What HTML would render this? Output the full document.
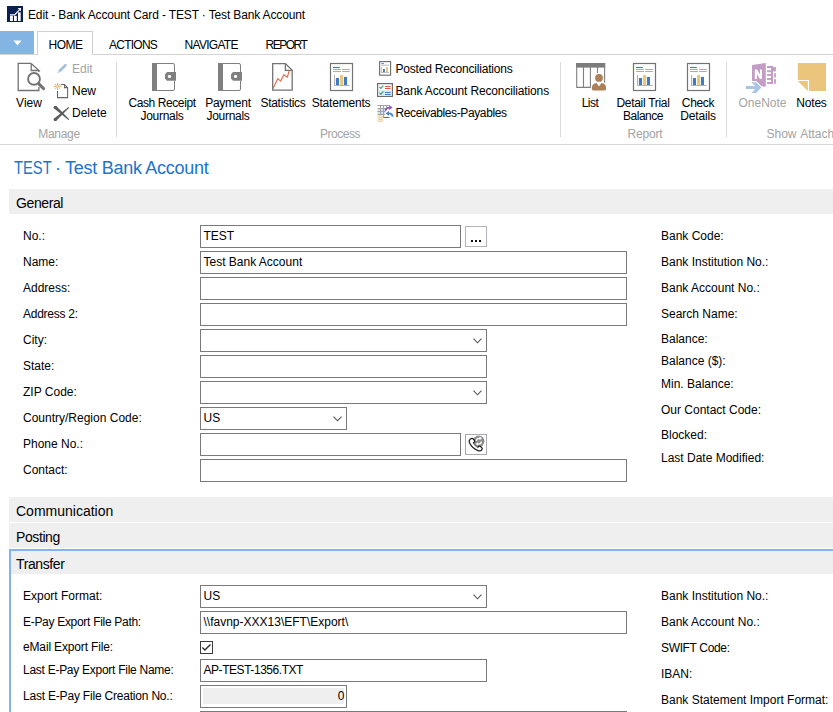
<!DOCTYPE html>
<html><head><meta charset="utf-8">
<style>
html,body{margin:0;padding:0;background:#fff;width:833px;height:712px;overflow:hidden;position:relative;font-family:"Liberation Sans",sans-serif;color:#000}
.a{position:absolute}
.t{position:absolute;font-size:12px;line-height:14px;white-space:nowrap}
.c{text-align:center}
.g{color:#a3a3a3}
.hd{position:absolute;background:#efefef;left:9px;width:824px;height:25px}
.hd span{position:absolute;left:7px;top:6px;font-size:14px;line-height:16px;letter-spacing:-0.4px}
.bx{position:absolute;box-sizing:border-box;border:1px solid #7a7a7a;height:23px;background:#fff}
.bx span{position:absolute;left:2.5px;top:3px;font-size:12px;line-height:14px;white-space:nowrap}
.chev{position:absolute;right:4px;top:8px;width:9px;height:6px}
.sep{position:absolute;top:62px;width:1px;height:75px;background:#dadada}
</style></head><body>

<!-- title bar -->
<svg class="a" style="left:7px;top:6px" width="16" height="16" viewBox="0 0 16 16">
<rect width="16" height="16" fill="#0a1f52"/>
<rect x="3" y="9.9" width="2.9" height="5.1" fill="#fff"/>
<rect x="7" y="9.9" width="2.8" height="5.1" fill="#fff"/>
<rect x="11" y="6.4" width="2.7" height="8.6" fill="#fff"/>
<path d="M2.9 8.8 H7.6 L12.6 3.6" stroke="#fff" stroke-width="1.2" fill="none"/>
<path d="M10.6 1.9 H14 V5.3 Z" fill="#fff"/>
</svg>
<div class="t" style="left:28px;top:8px;letter-spacing:-0.14px">Edit - Bank Account Card - TEST · Test Bank Account</div>

<!-- tabs -->
<div class="a" style="left:0;top:31px;width:34px;height:23px;background:#84b4e4"></div>
<svg class="a" style="left:13px;top:40px" width="9" height="6" viewBox="0 0 9 6"><path d="M0.5 0.5 L8.5 0.5 L4.5 5.5Z" fill="#fff"/></svg>
<div class="a" style="left:0;top:54px;width:833px;height:1px;background:#d4d4d4"></div>
<div class="a" style="left:37px;top:31px;width:54px;height:23px;border:1px solid #d0d0d0;border-bottom:none;background:#fff"></div>
<div class="t" style="left:48.5px;top:38px;letter-spacing:-0.5px">HOME</div>
<div class="t" style="left:109px;top:38px;letter-spacing:-0.75px">ACTIONS</div>
<div class="t" style="left:184.5px;top:38px;letter-spacing:-0.7px">NAVIGATE</div>
<div class="t" style="left:265.5px;top:38px;letter-spacing:-1.5px">REPORT</div>

<!-- ribbon -->
<div class="a" style="left:0;top:144px;width:833px;height:1px;background:#d6d6d6"></div>
<div class="sep" style="left:116px"></div>
<div class="sep" style="left:560px"></div>
<div class="sep" style="left:726px"></div>


<!-- Manage group -->
<svg class="a" style="left:16px;top:61px" width="32" height="32" viewBox="0 0 32 32">
<path d="M15.2 2.4 H2.2 V29.5 H22.9 V26" stroke="#737373" stroke-width="1.3" fill="none"/>
<path d="M15.2 2.4 V9.5 H22.9 L15.2 2.4" stroke="#737373" stroke-width="1.3" fill="none" stroke-linejoin="miter"/>
<path d="M22.9 9.5 V11" stroke="#737373" stroke-width="1.3" fill="none"/>
<circle cx="18" cy="17.9" r="5.9" stroke="#737373" stroke-width="1.9" fill="none"/>
<path d="M22.6 22.6 L27.6 27.6" stroke="#737373" stroke-width="3" stroke-linecap="round"/>
</svg>
<div class="t c" style="left:9px;top:96px;width:40px">View</div>
<svg class="a" style="left:55px;top:62px" width="14" height="14" viewBox="0 0 14 14">
<path d="M3.2 8.6 L9.6 2.2 Q10.3 1.5 11 2.2 L11.5 2.7 Q12.2 3.4 11.5 4.1 L5.1 10.5 Z" fill="#a3bfe0"/>
<path d="M3 9 L4.7 10.7 L1.9 11.8 Z" fill="#c5d7ec"/>
</svg>
<div class="t g" style="left:72px;top:62px">Edit</div>
<svg class="a" style="left:53px;top:83px" width="16" height="16" viewBox="0 0 16 16">
<path d="M4.5 8.1 V14.6 H14.6 V4.6 L11.5 1.5 H7.8" stroke="#666" stroke-width="1.05" fill="none"/>
<path d="M11.5 1.5 V4.6 H14.6" stroke="#666" stroke-width="1.05" fill="none"/>
<g stroke="#e9b76a" stroke-width="1.1" stroke-linecap="round"><path d="M4.5 0.4 V6.4 M1.3 3.4 H7.7 M2.5 1.4 L2.6 1.5 M6.5 1.4 L6.4 1.5 M2.5 5.4 L2.6 5.3 M6.5 5.4 L6.4 5.3"/></g>
<circle cx="4.5" cy="3.4" r="1.3" fill="#fff" stroke="#e9b76a" stroke-width="1"/>
</svg>
<div class="t" style="left:72px;top:84px">New</div>
<svg class="a" style="left:53px;top:105px" width="17" height="16" viewBox="0 0 17 16">
<path d="M1.13 3.49 L15.43 15.01 L16.17 14.19 L3.27 1.11 Z" fill="#5c5c5c"/><circle cx="2.2" cy="2.3" r="1.6" fill="#5c5c5c"/>
<path d="M3.27 15.79 L16.17 2.71 L15.43 1.89 L1.13 13.41 Z" fill="#5c5c5c"/><circle cx="2.2" cy="14.6" r="1.6" fill="#5c5c5c"/>
</svg>
<div class="t" style="left:72px;top:106px">Delete</div>
<div class="t c g" style="left:19px;top:127px;width:80px;letter-spacing:-0.3px">Manage</div>

<!-- Process group -->
<svg class="a" style="left:148px;top:61px" width="32" height="32" viewBox="0 0 32 32">
<rect x="4" y="2" width="5" height="28" fill="#808080"/>
<path d="M8.5 2.5 H25 Q26.5 2.5 26.5 4 V11 M26.5 19.7 V28 Q26.5 29.5 25 29.5 H8.5" stroke="#808080" stroke-width="1" fill="none"/>
<path d="M19 11 H28 V19.7 H19 L17 17.5 V13.2 Z" fill="#808080"/>
<circle cx="21.5" cy="15.4" r="1.6" fill="#fff"/>
</svg>
<div class="t c" style="left:122px;top:96px;width:80px;letter-spacing:-0.4px">Cash Receipt</div>
<div class="t c" style="left:122px;top:108.5px;width:80px;letter-spacing:-0.3px">Journals</div>
<svg class="a" style="left:214px;top:61px" width="32" height="32" viewBox="0 0 32 32">
<rect x="4" y="2" width="5" height="28" fill="#808080"/>
<path d="M8.5 2.5 H25 Q26.5 2.5 26.5 4 V11 M26.5 19.7 V28 Q26.5 29.5 25 29.5 H8.5" stroke="#808080" stroke-width="1" fill="none"/>
<path d="M19 11 H28 V19.7 H19 L17 17.5 V13.2 Z" fill="#808080"/>
<circle cx="21.5" cy="15.4" r="1.6" fill="#fff"/>
</svg>
<div class="t c" style="left:188px;top:96px;width:80px;letter-spacing:-0.25px">Payment</div>
<div class="t c" style="left:188px;top:108.5px;width:80px;letter-spacing:-0.3px">Journals</div>
<svg class="a" style="left:266px;top:61px" width="32" height="32" viewBox="0 0 32 32">
<path d="M6.7 2.6 H19.4 L26.2 9.3 V29.2 H6.7 Z" stroke="#737373" stroke-width="1.3" fill="#fff"/>
<path d="M19.4 2.6 V9.3 H26.2" stroke="#737373" stroke-width="1.3" fill="none"/>
<path d="M7 27.5 L11.8 17.6 L14.7 20.1 L17.8 13.7 L21.4 16.2 L23.1 10" stroke="#e2684a" stroke-width="1.15" fill="none" stroke-linejoin="round"/>
</svg>
<div class="t c" style="left:243px;top:96px;width:80px;letter-spacing:-0.3px">Statistics</div>
<svg class="a" style="left:325px;top:61px" width="32" height="32" viewBox="0 0 32 32">
<rect x="5.5" y="2.5" width="22" height="27" stroke="#737373" stroke-width="1.2" fill="#fff"/>
<path d="M8 6.5 H14.8" stroke="#3f7bc4" stroke-width="1.1"/>
<path d="M8 8.5 H15.9 M17.1 8.5 H24.8 M8 10.5 H15.9 M17.1 10.5 H24.8" stroke="#a3a3a3" stroke-width="0.9"/>
<path d="M9.5 14 V24.5 H24.8" stroke="#a8a8a8" stroke-width="0.9" fill="none"/>
<rect x="10.9" y="17" width="3.1" height="7" fill="#3f7bc4"/>
<rect x="15.1" y="14.1" width="2.9" height="9.9" fill="#ecc478"/>
<rect x="18.9" y="15.9" width="3.1" height="8.1" fill="#3f7bc4"/>
</svg>
<div class="t c" style="left:301px;top:96px;width:80px;letter-spacing:-0.2px">Statements</div>

<svg class="a" style="left:377px;top:60px" width="16" height="16" viewBox="0 0 16 16">
<rect x="2.6" y="1.6" width="11" height="13.6" stroke="#6b6b6b" stroke-width="1.1" fill="#fff"/>
<path d="M4.2 3.6 H7" stroke="#3f7bc4" stroke-width="0.9"/>
<path d="M4.2 5.2 H12" stroke="#a8a8a8" stroke-width="0.8"/>
<path d="M4.4 7 V12.5 H12.2" stroke="#a8a8a8" stroke-width="0.8" fill="none"/>
<rect x="6" y="9" width="1.9" height="3" fill="#3f7bc4"/>
<rect x="9" y="7.1" width="1.9" height="4.9" fill="#ecc478"/>
</svg>
<div class="t" style="left:395.5px;top:62px;letter-spacing:-0.2px">Posted Reconciliations</div>
<svg class="a" style="left:377px;top:82px" width="16" height="16" viewBox="0 0 16 16">
<rect x="0.6" y="1.6" width="14.8" height="12.8" stroke="#6b6b6b" stroke-width="1.2" fill="#fff"/>
<rect x="1.5" y="8.2" width="13" height="5.3" fill="#d9e6f3"/>
<path d="M2.4 5 L3.9 6.4 L6.4 3.6" stroke="#3ea374" stroke-width="1.1" fill="none"/>
<path d="M2.4 10.8 L3.9 12.2 L6.4 9.4" stroke="#3ea374" stroke-width="1.1" fill="none"/>
<path d="M8 4.5 H13.5 M8 6.5 H13.5" stroke="#e2583a" stroke-width="1"/>
<path d="M8 10.5 H13.5 M8 12.5 H13.5" stroke="#3f7bc4" stroke-width="1"/>
</svg>
<div class="t" style="left:395.5px;top:84px;letter-spacing:-0.14px">Bank Account Reconciliations</div>
<svg class="a" style="left:377px;top:104px" width="17" height="18" viewBox="0 0 17 18">
<rect x="0.5" y="4.5" width="8" height="6" fill="#d4e3f3"/>
<path d="M0.5 1.5 H12.5 M0.5 4.5 H9 M0.5 7.5 H8.5 M0.5 10.5 H8 M3.5 1.5 V10.5 M6.5 1.5 V13.5 M9.5 1.5 V3.5 M12.5 1.5 V2" stroke="#a3a3a3" stroke-width="1" fill="none"/>
<path d="M6.5 13.5 H12.5" stroke="#6a6a6a" stroke-width="1" fill="none"/>
<path d="M8.6 6.8 Q8.8 3.6 12.6 3.6" stroke="#8b55bb" stroke-width="1.9" fill="none"/>
<path d="M12.2 1.2 L15.6 3.6 L12.2 6 Z" fill="#8b55bb"/>
<path d="M15.6 12.6 Q15.4 9.4 11.6 9.4" stroke="#4a82c6" stroke-width="1.9" fill="none"/>
<path d="M12 7 L8.6 9.4 L12 11.8 Z" fill="#4a82c6"/>
<g fill="#fff" stroke="#e8b968" stroke-width="0.8"><ellipse cx="3.4" cy="16.6" rx="2.4" ry="0.9"/><ellipse cx="3.4" cy="14.6" rx="2.4" ry="0.9"/><ellipse cx="3.4" cy="12.6" rx="2.4" ry="0.9"/></g>
</svg>
<div class="t" style="left:395.5px;top:106px;letter-spacing:-0.38px">Receivables-Payables</div>
<div class="t c g" style="left:300px;top:127px;width:80px;letter-spacing:-0.5px">Process</div>

<!-- Report group -->
<svg class="a" style="left:575px;top:61px" width="32" height="32" viewBox="0 0 32 32">
<rect x="1" y="2" width="29.3" height="4.6" fill="#7d7d7d"/>
<path d="M1.7 6 V26.4 H15.8 M8.5 6 V26.4 M15.4 6 V26.4 M22.5 6 V12 M29.6 6 V21.8" stroke="#808080" stroke-width="1.1" fill="none"/>
<circle cx="24" cy="16.9" r="3.9" fill="#ad8059"/>
<path d="M16.8 28.3 Q16.6 23.6 19.6 22.6 L21.6 22 L24 25.4 L26.4 22 L28.4 22.6 Q31.3 23.6 31.1 28.3 Q31 29.6 29 29.6 H18.9 Q16.9 29.6 16.8 28.3 Z" fill="#ad8059"/>
</svg>
<div class="t c" style="left:550px;top:96px;width:80px;letter-spacing:-0.5px">List</div>
<svg class="a" style="left:628px;top:61px" width="32" height="32" viewBox="0 0 32 32">
<rect x="5.5" y="2.5" width="22" height="27" stroke="#737373" stroke-width="1.2" fill="#fff"/>
<path d="M8 6.5 H14.8" stroke="#3f7bc4" stroke-width="1.1"/>
<path d="M8 8.5 H15.9 M17.1 8.5 H24.8 M8 10.5 H15.9 M17.1 10.5 H24.8" stroke="#a3a3a3" stroke-width="0.9"/>
<path d="M9.5 14 V24.5 H24.8" stroke="#a8a8a8" stroke-width="0.9" fill="none"/>
<rect x="10.9" y="17" width="3.1" height="7" fill="#3f7bc4"/>
<rect x="15.1" y="14.1" width="2.9" height="9.9" fill="#ecc478"/>
<rect x="18.9" y="15.9" width="3.1" height="8.1" fill="#3f7bc4"/>
</svg>
<div class="t c" style="left:603px;top:96px;width:80px;letter-spacing:-0.3px">Detail Trial</div>
<div class="t c" style="left:603px;top:108.5px;width:80px;letter-spacing:-0.5px">Balance</div>
<svg class="a" style="left:682px;top:61px" width="32" height="32" viewBox="0 0 32 32">
<rect x="5.5" y="2.5" width="22" height="27" stroke="#737373" stroke-width="1.2" fill="#fff"/>
<path d="M8 6.5 H14.8" stroke="#3f7bc4" stroke-width="1.1"/>
<path d="M8 8.5 H15.9 M17.1 8.5 H24.8 M8 10.5 H15.9 M17.1 10.5 H24.8" stroke="#a3a3a3" stroke-width="0.9"/>
<path d="M9.5 14 V24.5 H24.8" stroke="#a8a8a8" stroke-width="0.9" fill="none"/>
<rect x="10.9" y="17" width="3.1" height="7" fill="#3f7bc4"/>
<rect x="15.1" y="14.1" width="2.9" height="9.9" fill="#ecc478"/>
<rect x="18.9" y="15.9" width="3.1" height="8.1" fill="#3f7bc4"/>
</svg>
<div class="t c" style="left:658px;top:96px;width:80px;letter-spacing:-0.35px">Check</div>
<div class="t c" style="left:658px;top:108.5px;width:80px;letter-spacing:-0.15px">Details</div>
<div class="t c g" style="left:605px;top:127px;width:80px;letter-spacing:-0.2px">Report</div>

<!-- Show Attachments group -->
<svg class="a" style="left:745px;top:61px" width="32" height="33" viewBox="0 0 32 33">
<g fill="#c39dc4">
<path d="M7 3.9 L20.8 2.1 V25.8 L16.6 25.3 L11.3 20 H7 Z"/>
<rect x="22.1" y="5" width="5.9" height="2.1"/><rect x="22.1" y="9.3" width="5.9" height="1.9"/><rect x="22.1" y="13" width="5.9" height="1.9"/><rect x="22.1" y="17" width="5.9" height="1.9"/><rect x="22.1" y="21" width="5.9" height="1.9"/>
<rect x="26" y="5" width="2" height="17.9"/>
<rect x="28" y="6.1" width="2.9" height="4.3"/>
<rect x="29.1" y="12.2" width="1.8" height="4.3"/><rect x="29.1" y="18.1" width="1.8" height="4.8"/>
</g>
<path d="M9.8 18.1 V8.5 H12 L15 13.6 V8.5 H17 V18.1 H14.9 L11.9 13 V18.1 Z" fill="#fff"/>
<g fill="#a9c5e1">
<rect x="1" y="25" width="11" height="3"/>
<path d="M6.4 21.2 H11.2 L16.4 26.5 L11.2 31.9 H6.4 L11.6 26.5 Z"/>
</g>
</svg>
<div class="t c g" style="left:722.5px;top:96px;width:80px;letter-spacing:0px">OneNote</div>
<svg class="a" style="left:796px;top:61px" width="32" height="32" viewBox="0 0 32 32">
<path d="M1.8 2 H30 V30 H13.1 V18.9 H1.8 Z" fill="#ebc57c"/>
<path d="M1.8 20.1 H11.8 V30 Z" fill="#ebc57c"/>
</svg>
<div class="t c" style="left:771.5px;top:96px;width:80px;letter-spacing:-0.2px">Notes</div>
<div class="t g" style="left:766.5px;top:127px;letter-spacing:0px;word-spacing:1px">Show Attachments</div>


<!-- page title -->
<div class="a" style="left:14px;top:157px;font-size:18px;line-height:22px;color:#2173cc;white-space:nowrap"><span style="display:inline-block;transform:scaleX(0.82);transform-origin:0 0">TEST</span></div>
<div class="a" style="left:55px;top:157px;font-size:18px;line-height:22px;color:#2173cc;white-space:nowrap">·</div>
<div class="a" style="left:65px;top:157px;font-size:18px;line-height:22px;color:#2173cc;letter-spacing:-0.27px;white-space:nowrap">Test Bank Account</div>
<div class="hd" style="top:189px"><span>General</span></div>
<div class="t" style="left:23px;top:229px">No.:</div>
<div class="t" style="left:23px;top:255px">Name:</div>
<div class="t" style="left:23px;top:281px">Address:</div>
<div class="t" style="left:23px;top:307px;letter-spacing:-0.25px">Address 2:</div>
<div class="t" style="left:23px;top:333px">City:</div>
<div class="t" style="left:23px;top:359px">State:</div>
<div class="t" style="left:23px;top:385px">ZIP Code:</div>
<div class="t" style="left:23px;top:411px">Country/Region Code:</div>
<div class="t" style="left:23px;top:437px">Phone No.:</div>
<div class="t" style="left:23px;top:463px">Contact:</div>
<div class="t" style="left:661px;top:229px">Bank Code:</div>
<div class="t" style="left:661px;top:255px">Bank Institution No.:</div>
<div class="t" style="left:661px;top:281px">Bank Account No.:</div>
<div class="t" style="left:661px;top:307px">Search Name:</div>
<div class="t" style="left:661px;top:332px">Balance:</div>
<div class="t" style="left:661px;top:354px">Balance ($):</div>
<div class="t" style="left:661px;top:377px">Min. Balance:</div>
<div class="t" style="left:661px;top:403px">Our Contact Code:</div>
<div class="t" style="left:661px;top:428px">Blocked:</div>
<div class="t" style="left:661px;top:451px">Last Date Modified:</div>
<div class="bx" style="left:200px;top:225px;width:261px;"><span>TEST</span></div>
<div class="a" style="left:465px;top:226px;width:20px;height:19px;border:1px solid #b4b4bc;background:#fff"></div>
<div class="a" style="left:471px;top:240px;width:2px;height:2px;background:#111"></div><div class="a" style="left:475px;top:240px;width:2px;height:2px;background:#111"></div><div class="a" style="left:479px;top:240px;width:2px;height:2px;background:#111"></div>
<div class="bx" style="left:200px;top:251px;width:427px;"><span>Test Bank Account</span></div>
<div class="bx" style="left:200px;top:277px;width:427px;"></div>
<div class="bx" style="left:200px;top:303px;width:427px;"></div>
<div class="bx" style="left:200px;top:329px;width:287px;"><svg class="chev" viewBox="0 0 9 6"><path d="M0.5 0.7 L4.5 4.8 L8.5 0.7" stroke="#555" stroke-width="1.1" fill="none"/></svg></div>
<div class="bx" style="left:200px;top:355px;width:287px;"></div>
<div class="bx" style="left:200px;top:381px;width:287px;"><svg class="chev" viewBox="0 0 9 6"><path d="M0.5 0.7 L4.5 4.8 L8.5 0.7" stroke="#555" stroke-width="1.1" fill="none"/></svg></div>
<div class="bx" style="left:200px;top:407px;width:147px;"><span>US</span><svg class="chev" viewBox="0 0 9 6"><path d="M0.5 0.7 L4.5 4.8 L8.5 0.7" stroke="#555" stroke-width="1.1" fill="none"/></svg></div>
<div class="bx" style="left:200px;top:433px;width:261px;"></div>
<div class="a" style="left:465px;top:434px;width:20px;height:19px;border:1px solid #a9a9b3;background:#fff"></div>
<svg class="a" style="left:466px;top:435px" width="20" height="19" viewBox="0 0 20 19">
<circle cx="12.8" cy="6.2" r="5.6" fill="#8c8c8c"/>
<path d="M10.3 6 Q10.3 3.4 13 3.3 L14.3 3.4" stroke="#fff" stroke-width="1.3" fill="none"/>
<path d="M13.6 1.6 L16 3.6 L13.4 5.2 Z" fill="#fff"/>
<path d="M15.3 6.4 Q15.3 9 12.6 9.1 L11.3 9" stroke="#fff" stroke-width="1.3" fill="none"/>
<path d="M12 10.8 L9.6 8.8 L12.2 7.2 Z" fill="#fff"/>
<path d="M4.4 3.9 Q6.3 2.6 7.6 4.3 L8.6 5.7 Q9.1 6.6 8.1 7.3 L7.5 7.8 Q9.2 10.5 11.9 12.2 L12.5 11.5 Q13.2 10.8 14.1 11.3 L15.4 12.2 Q16.9 13.3 15.8 14.8 Q14.5 16.5 12.1 15.7 Q6.2 13.4 3.3 7.5 Q2.7 5.2 4.4 3.9 Z" fill="#fff" stroke="#1a1a1a" stroke-width="1.25"/>
<path d="M7.6 8.2 L11.6 12" stroke="#8c8c8c" stroke-width="1.5"/>
</svg>
<div class="bx" style="left:200px;top:459px;width:427px;"></div>
<div class="hd" style="top:497px"><span style="letter-spacing:0">Communication</span></div>
<div class="hd" style="top:523px"><span>Posting</span></div>
<div class="a" style="left:9px;top:549px;width:830px;height:200px;box-sizing:border-box;border:2px solid #84b2f4;border-right:none;border-bottom:none"></div>
<div class="a" style="left:11px;top:551px;width:822px;height:23px;background:#efefef"><span class="a" style="left:5px;top:5px;font-size:14px;line-height:16px;letter-spacing:-0.4px">Transfer</span></div>
<div class="t" style="left:23px;top:589px">Export Format:</div>
<div class="t" style="left:23px;top:615px;letter-spacing:-0.3px">E-Pay Export File Path:</div>
<div class="t" style="left:23px;top:640px;letter-spacing:-0.15px">eMail Export File:</div>
<div class="t" style="left:23px;top:663px;letter-spacing:-0.27px">Last E-Pay Export File Name:</div>
<div class="t" style="left:23px;top:689px;letter-spacing:-0.2px">Last E-Pay File Creation No.:</div>
<div class="t" style="left:661px;top:589px">Bank Institution No.:</div>
<div class="t" style="left:661px;top:615px">Bank Account No.:</div>
<div class="t" style="left:661px;top:641px;letter-spacing:-0.35px">SWIFT Code:</div>
<div class="t" style="left:661px;top:667px">IBAN:</div>
<div class="t" style="left:661px;top:693px">Bank Statement Import Format:</div>
<div class="bx" style="left:200px;top:585px;width:287px;"><span>US</span><svg class="chev" viewBox="0 0 9 6"><path d="M0.5 0.7 L4.5 4.8 L8.5 0.7" stroke="#555" stroke-width="1.1" fill="none"/></svg></div>
<div class="bx" style="left:200px;top:611px;width:427px;"><span>\\favnp-XXX13\EFT\Export\</span></div>
<div class="a" style="left:200px;top:641px;width:11px;height:11px;border:1px solid #3c3c3c;background:#fff"></div>
<svg class="a" style="left:200px;top:641px" width="13" height="13" viewBox="0 0 13 13"><path d="M2.4 6.4 L4.9 8.9 L10.5 3.4" stroke="#2e2e2e" stroke-width="1.4" fill="none"/></svg>
<div class="bx" style="left:200px;top:659px;width:287px;"><span style="letter-spacing:-0.45px">AP-TEST-1356.TXT</span></div>
<div class="bx" style="left:200px;top:685px;width:147px"><div class="a" style="left:2px;top:2px;right:2px;bottom:3px;background:#efefef"></div><span style="left:auto;right:1.5px">0</span></div>
<div class="bx" style="left:200px;top:711px;width:427px;"></div>

</body></html>
